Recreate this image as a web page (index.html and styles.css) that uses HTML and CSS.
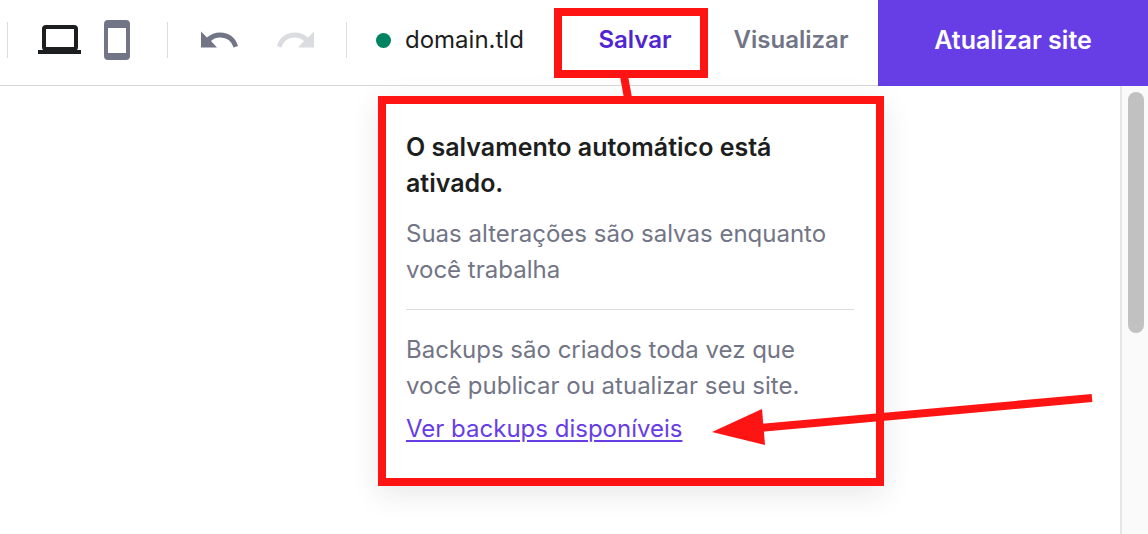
FILE: index.html
```html
<!DOCTYPE html>
<html lang="pt">

<head>
    <meta charset="UTF-8">
    <meta name="viewport" content="width=device-width, initial-scale=1.0">
    <title>domain.tld</title>
    <link rel="stylesheet" href="styles.css">
</head>

<body>
    <header class="topbar">
        <div class="group devices">
            <button class="icon-btn" aria-label="Desktop">
                <svg width="44" height="30" viewBox="0 0 44 30">
                    <rect x="6" y="2" width="32" height="22" rx="2" fill="none" stroke="#1d1e20" stroke-width="4" />
                    <path d="M0 25h43v4H0z" fill="#1d1e20" />
                </svg>
            </button>
            <button class="icon-btn" aria-label="Mobile">
                <svg width="26" height="40" viewBox="0 0 26 40">
                    <path fill="#727586" fill-rule="evenodd" d="M4 0h18a4 4 0 0 1 4 4v32a4 4 0 0 1-4 4H4a4 4 0 0 1-4-4V4a4 4 0 0 1 4-4zM4 8v25h18V8z" />
                </svg>
            </button>
        </div>
        <div class="group history">
            <button class="icon-btn" aria-label="Undo">
                <svg width="38" height="18" viewBox="0 0 38 18">
                    <path fill="#727586" d="M0 0.500L6 6.500C10 3 14 1.500 19 1.500c9 0 15.500 5 18 13.500l-4.500 1.500C30.500 10 26 6.500 19 6.500c-3.500 0-6.500 1-9 3.500L16 16.500H0z" />
                </svg>
            </button>
            <button class="icon-btn" aria-label="Redo" disabled>
                <svg width="38" height="18" viewBox="0 0 38 18">
                    <path fill="#dadce0" d="M37 0.500L31 6.500C27 3 23 1.500 18 1.500 9 1.500 2.500 6.500 0 15l4.500 1.500C6.500 10 11 6.500 18 6.500c3.500 0 6.500 1 9 3.500L21 16.500h16z" />
                </svg>
            </button>
        </div>
        <div class="group site">
            <span class="dot"></span>
            <span>domain.tld</span>
        </div>
        <div class="save">
            <button class="save-btn">Salvar</button>
            <svg class="connector" width="20" height="22" viewBox="0 0 20 22">
                <path d="M7 0L11 22" stroke="#ff1414" stroke-width="8" />
            </svg>
            <div class="popup">
                <h2>O salvamento automático está ativado.</h2>
                <p>Suas alterações são salvas enquanto você trabalha</p>
                <hr>
                <p>Backups são criados toda vez que você publicar ou atualizar seu site.</p>
                <a href="#">Ver backups disponíveis</a>
                <svg class="arrow" width="384" height="56" viewBox="0 0 384 56">
                    <path d="M48 34L380 4" stroke="#ff1414" stroke-width="8" />
                    <path d="M0 38L50 15L53 51z" fill="#ff1414" />
                </svg>
            </div>
        </div>
        <button class="preview">Visualizar</button>
        <button class="update">Atualizar site</button>
    </header>
    <main class="canvas">
        <div class="scrollbar">
            <div class="thumb"></div>
        </div>
    </main>
</body>

</html>
```

FILE: styles.css
```css
* {
    box-sizing: border-box;
}

body {
    display: flex;
    flex-direction: column;
    min-height: 100vh;
    margin: 0;
    font-family: Inter, "Liberation Sans", sans-serif;
    font-size: 24px;
    line-height: 36px;
    color: #1d1e20;
    background: #fff;
}

button {
    padding: 0;
    border: 0;
    background: none;
    font: inherit;
    font-weight: 600;
    color: #727586;
    cursor: pointer;
}

.topbar {
    display: flex;
    align-items: center;
    height: 86px;
    padding-left: 7px;
    border-bottom: 1px solid #d6d7d9;
}

.group {
    display: flex;
    align-items: center;
    height: 36px;
    margin-bottom: 5px;
    border-left: 1px solid #dadce0;
}

.icon-btn {
    display: flex;
}

.devices {
    gap: 22px;
    padding-left: 30px;
    padding-right: 37px;
}

.history {
    gap: 38px;
    padding-left: 33px;
    padding-right: 31px;
}

.site {
    gap: 14px;
    padding-left: 29px;
}

.dot {
    width: 15px;
    height: 15px;
    border-radius: 50%;
    background: #008361;
}

.save {
    position: relative;
    align-self: flex-start;
    width: 154px;
    margin-top: 8px;
    margin-left: auto;
}

.save-btn {
    width: 100%;
    height: 70px;
    padding-left: 8px;
    padding-bottom: 6px;
    border: 8px solid #ff1414;
    color: #5025d1;
}

/* links the button to its popup */
.connector {
    position: absolute;
    top: 68px;
    left: 63px;
    z-index: 2;
}

.popup {
    position: absolute;
    top: 88px;
    right: -176px;
    z-index: 1;
    width: 506px;
    padding: 25px 22px 31px 20px;
    border: 8px solid #ff1414;
    background: #fff;
    box-shadow: 0 8px 28px rgba(29, 30, 32, .1);
}

.popup h2 {
    margin: 0 0 15px;
    font-size: 25px;
    font-weight: 600;
}

.popup p {
    margin: 0;
    color: #727586;
}

.popup hr {
    margin: 21px 0 22px;
    border: 0;
    border-top: 1px solid #dadce0;
}

.popup a {
    display: block;
    width: max-content;
    margin-top: 7px;
    color: #673de6;
    text-decoration-thickness: 2px;
    text-underline-offset: 3px;
}

.arrow {
    position: absolute;
    right: -220px;
    bottom: 28px;
}

.preview {
    width: 118px;
    margin: 0 28px 5px 24px;
}

.update {
    align-self: stretch;
    width: 270px;
    margin-bottom: -1px;
    padding-bottom: 6px;
    background: #673de6;
    font-size: 25px;
    color: #fff;
}

.canvas {
    display: flex;
    flex: 1;
    justify-content: flex-end;
}

.scrollbar {
    width: 28px;
    padding: 6px 4px 6px 6px;
    border-left: 2px solid #e6e6e6;
    background: #fafafa;
}

.thumb {
    height: 241px;
    border-radius: 8px;
    background: #c1c1c1;
}
```
